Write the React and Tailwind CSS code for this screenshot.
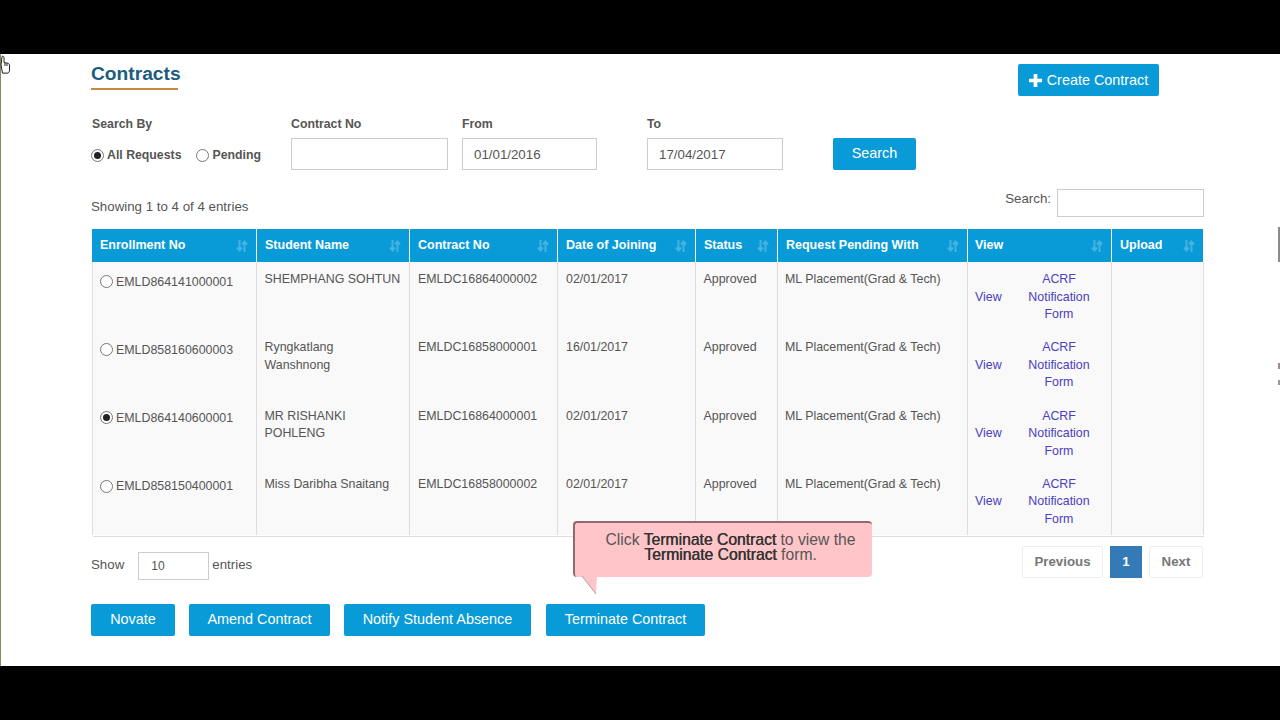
const rows = [
  { enroll: 'EMLD864141000001', name: 'SHEMPHANG SOHTUN', contract: 'EMLDC16864000002', date: '02/01/2017' },
  { enroll: 'EMLD858160600003', name: 'Ryngkatlang Wanshnong', contract: 'EMLDC16858000001', date: '16/01/2017' },
  { enroll: 'EMLD864140600001', name: 'MR RISHANKI POHLENG', contract: 'EMLDC16864000001', date: '02/01/2017', checked: true },
  { enroll: 'EMLD858150400001', name: 'Miss Daribha Snaitang', contract: 'EMLDC16858000002', date: '02/01/2017' },
];

const columns = [
  { label: 'Enrollment No', width: 'w-[164px] pl-[7px]' },
  { label: 'Student Name', width: 'w-[153px] pl-[8px]' },
  { label: 'Contract No', width: 'w-[148px] pl-[8px]' },
  { label: 'Date of Joining', width: 'w-[138px] pl-[8px]' },
  { label: 'Status', width: 'w-[82px] pl-[8px]' },
  { label: 'Request Pending With', width: 'w-[190px] pl-[8px]' },
  { label: 'View', width: 'w-[144px] pl-[7px]' },
  { label: 'Upload', width: 'w-[92px] pl-[8px]' },
];

function SortIcon() {
  return (
    <svg width="12" height="12" viewBox="0 0 12 12" className="absolute right-[8px] top-[11px]" fill="none" stroke="#45b2e2" strokeWidth="2">
      <path d="M3.500 0v10M1 7.500l2.500 3 2.500-3" />
      <path d="M8.500 12V2M6 4.500l2.500-3 2.500 3" />
    </svg>
  );
}

function Radio({ checked }) {
  return (
    <span className="inline-flex h-[13px] w-[13px] shrink-0 items-center justify-center rounded-full border border-[#777] bg-white">
      {checked && <span className="h-[7px] w-[7px] rounded-full bg-[#222]" />}
    </span>
  );
}

function Button({ children, className = '' }) {
  return (
    <button className={`h-[32px] rounded-[2px] bg-[#089bd8] text-[14.4px] text-white ${className}`}>{children}</button>
  );
}

export default function App() {
  return (
    <div className="flex h-[720px] w-[1280px] flex-col overflow-hidden bg-black font-['Liberation_Sans',Arial,sans-serif] text-[13.3px] text-[#555]">
      <div className="h-[54px] shrink-0" />
      <div className="relative h-[612px] shrink-0 border-l border-[#8a8a5c] bg-white pl-[90px] pr-[76px]">
        <svg width="12" height="20" viewBox="0 0 12 20" className="absolute left-[-1px] top-[1px]" fill="#fff" stroke="#222" strokeWidth="1">
          <path d="M2 1.500c1-.8 2 0 2 1v5l3 .6c1.500.3 2.500 1 2.500 2v5c0 1-.6 2.400-1.500 3H2.500L1 10z" />
          <path d="M5 8v3M7 8.500V11" />
        </svg>
        <span className="absolute right-0 top-[173px] h-[35px] w-[2px] bg-[#8c8c8c]" />
        <span className="absolute right-0 top-[309px] h-[6px] w-[2px] bg-[#a08c90]" />
        <span className="absolute right-0 top-[326px] h-[5px] w-[2px] bg-[#999]" />

        <div className="flex items-start justify-between pr-[45px]">
          <div className="pt-[8px]">
            <h1 className="w-[87px] whitespace-nowrap border-b-2 border-[#c8873f] pb-[2px] text-[19.2px] font-bold leading-[24px] text-[#1a5c7e]">Contracts</h1>
          </div>
          <button className="mt-[10px] flex h-[32px] w-[141px] items-center justify-center gap-[5px] rounded-[2px] bg-[#089bd8] text-[14.4px] text-white">
            <svg width="13" height="13" viewBox="0 0 14 14" fill="#fff"><path d="M5 0h4v5h5v4H9v5H5V9H0V5h5z" /></svg>
            <span className="pt-[1px]">Create Contract</span>
          </button>
        </div>

        <div className="mt-[20px] flex items-start text-[12.3px] font-bold">
          <div className="w-[200px]">
            <div className="h-[15px] pl-[1px] leading-[17px]">Search By</div>
            <div className="mt-[15px] flex items-center">
              <Radio checked />
              <span className="ml-[3px]">All Requests</span>
              <div className="ml-[15px] flex"><Radio /></div>
              <span className="ml-[3px]">Pending</span>
            </div>
          </div>
          <div className="w-[157px]">
            <div className="h-[15px] leading-[17px]">Contract No</div>
            <div className="mt-[7px] h-[32px] border border-[#ccc] bg-white" />
          </div>
          <div className="ml-[14px] w-[135px]">
            <div className="h-[15px] leading-[17px]">From</div>
            <div className="mt-[7px] flex h-[32px] items-center border border-[#ccc] bg-white pl-[11px] pt-[1px] text-[13.3px] font-normal">01/01/2016</div>
          </div>
          <div className="ml-[50px] w-[136px]">
            <div className="h-[15px] leading-[17px]">To</div>
            <div className="mt-[7px] flex h-[32px] items-center border border-[#ccc] bg-white pl-[11px] pt-[1px] text-[13.3px] font-normal">17/04/2017</div>
          </div>
          <Button className="ml-[50px] mt-[22px] w-[83px] font-normal">Search</Button>
        </div>

        <div className="mt-[19px] flex h-[28px] items-center justify-between">
          <span className="mt-[8px]">Showing 1 to 4 of 4 entries</span>
          <div className="flex items-center">
            <span className="mr-[6px] mt-[-8px]">Search:</span>
            <div className="h-[28px] w-[147px] border border-[#ccc] bg-white" />
          </div>
        </div>

        <table className="ml-[1px] mt-[12px] w-[1112px] table-fixed border-collapse text-[12.4px]">
          <thead>
            <tr className="h-[33px] bg-[#089bd8] text-left text-[12.5px] text-white">
              {columns.map((c) => (
                <th key={c.label} className={`relative border-x border-white/90 pr-[8px] font-bold first:border-l-[#089bd8] ${c.width}`}>
                  {c.label}
                  <SortIcon />
                </th>
              ))}
            </tr>
          </thead>
          <tbody>
            {rows.map((r) => (
              <tr key={r.enroll} className="h-[68.3px] bg-[#f9f9f9] align-top leading-[17.6px]">
                <td className="border-x border-[#ddd] pl-[7px] pr-0 pt-[11.500px]">
                  <div className="flex items-center gap-[3px]">
                    <div className="mb-[2px] flex"><Radio checked={r.checked} /></div>
                    <span>{r.enroll}</span>
                  </div>
                </td>
                <td className="border-x border-[#ddd] pl-[7.500px] pr-[8px] pt-[9px]">{r.name}</td>
                <td className="border-x border-[#ddd] px-[8px] pt-[9px]">{r.contract}</td>
                <td className="border-x border-[#ddd] px-[8px] pt-[9px]">{r.date}</td>
                <td className="border-x border-[#ddd] pl-[7.500px] pr-[8px] pt-[9px]">Approved</td>
                <td className="border-x border-[#ddd] pl-[7px] pr-[8px] pt-[9px]">ML Placement(Grad &amp; Tech)</td>
                <td className="border-x border-[#ddd] pl-[7px] pr-[20px] pt-[9px] text-[#4a3fc0]">
                  <div className="flex items-center justify-between">
                    <span>View</span>
                    <span className="w-[64px] text-center">ACRF Notification Form</span>
                  </div>
                </td>
                <td className="border-x border-[#ddd]" />
              </tr>
            ))}
          </tbody>
          <tfoot>
            <tr className="h-px border-b border-[#ddd]"><td colSpan={8} /></tr>
          </tfoot>
        </table>

        <div className="mt-[9px] flex items-start justify-between pr-[1px]">
          <div className="mt-[6px] flex items-center">
            <span className="mb-[2px]">Show</span>
            <div className="ml-[14px] flex h-[28px] w-[71px] items-center border border-[#ccc] bg-white pl-[12px] text-[12px]">10</div>
            <span className="mb-[2px] ml-[3px]">entries</span>
          </div>
          <div className="flex font-bold">
            <div className="flex h-[32px] w-[81px] items-center justify-center rounded-[2px] border border-[#eee] text-[#777]">Previous</div>
            <div className="ml-[7px] flex h-[32px] w-[32px] items-center justify-center bg-[#337ab7] text-white">1</div>
            <div className="ml-[7px] flex h-[32px] w-[54px] items-center justify-center rounded-[2px] border border-[#eee] text-[#777]">Next</div>
          </div>
        </div>

        <div className="mt-[24px] flex">
          <Button className="w-[84px]">Novate</Button>
          <Button className="ml-[14px] w-[141px]">Amend Contract</Button>
          <Button className="ml-[14px] w-[187px]">Notify Student Absence</Button>
          <Button className="ml-[15px] w-[159px]">Terminate Contract</Button>
        </div>

        <div className="absolute left-[572px] top-[467px]">
          <div className="flex h-[56px] w-[299px] flex-col items-center rounded-[4px] border-l-2 border-t-2 border-[#8f6a6e] bg-[#ffc5c9] pl-[14px] pt-[9px] text-[15.7px] leading-[15px] text-[#555]">
            <div className="whitespace-nowrap">Click <span className="text-[#333] [text-shadow:0.4px_0_0_#333]">Terminate Contract</span> to view the</div>
            <div className="whitespace-nowrap"><span className="text-[#333] [text-shadow:0.4px_0_0_#333]">Terminate Contract</span> form.</div>
          </div>
          <svg width="16" height="19" viewBox="0 0 16 19" className="absolute left-[9px] top-[55px]">
            <path d="M0 0 14 18 15 0z" fill="#ffc5c9" />
            <path d="M0 0 14 18" stroke="#b89a9c" strokeWidth="1" fill="none" />
          </svg>
        </div>
      </div>
      <div className="flex-1" />
    </div>
  );
}
